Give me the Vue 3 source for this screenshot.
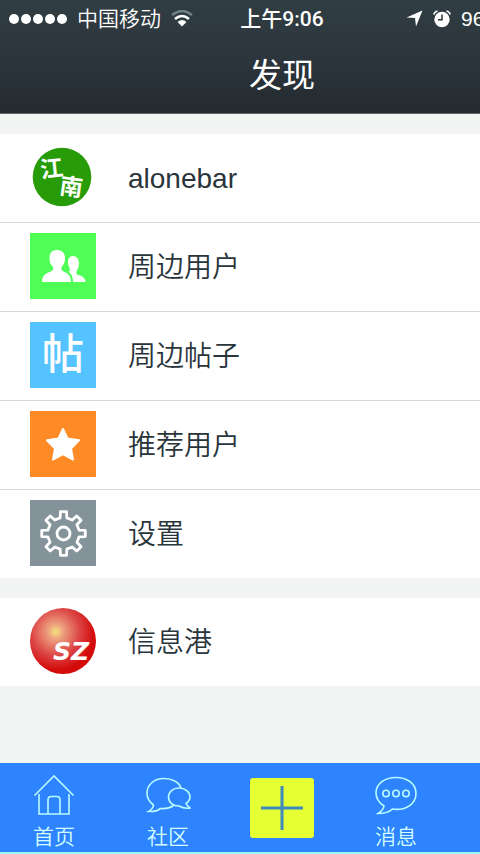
<script setup>
const groups = [
  [
    { id: 'profile', label: 'alonebar' },
    { id: 'users', label: '周边用户' },
    { id: 'posts', label: '周边帖子' },
    { id: 'recommend', label: '推荐用户' },
    { id: 'settings', label: '设置' },
  ],
  [{ id: 'port', label: '信息港' }],
]

const teeth = 8
const gearPath = (() => {
  const points = []
  const at = (radius, degrees) => {
    const a = (degrees * Math.PI) / 180
    points.push(`${(33.5 + radius * Math.cos(a)).toFixed(2)} ${(33.5 + radius * Math.sin(a)).toFixed(2)}`)
  }
  for (let i = 0; i < teeth; i++) {
    const c = (i * 360) / teeth
    at(16, c - 12)
    at(22, c - 8)
    at(22, c + 8)
    at(16, c + 12)
  }
  return `M${points.join('L')}Z`
})()
</script>

<template>
  <div class="screen">
    <div class="page">
      <header class="header">
        <div class="status">
          <div class="carrier">
            <span class="dots"><i v-for="n in 5" :key="n"></i></span>
            <span>中国移动</span>
            <svg class="wifi" width="22" height="17" viewBox="0 0 22 17" fill="none">
              <path d="M1 5Q11 -3 21 5" stroke="#718087" stroke-width="2.5" />
              <path d="M4 9Q11 3 18 9" stroke="#fff" stroke-width="2.6" />
              <path d="M6.500 12Q11 8 15.500 12L11 16.500Z" fill="#fff" />
            </svg>
          </div>
          <time class="clock">上午9:06</time>
          <div class="indicators">
            <svg width="17" height="17" viewBox="0 0 17 17"><path d="M16.500 .5L10 16.500L9 8L.5 7.500Z" fill="#fff" /></svg>
            <svg width="18" height="18" viewBox="0 0 18 18" fill="none">
              <circle cx="9" cy="9.500" r="7.700" fill="#fff" />
              <path d="M.8 4.500Q1.500 1.700 4.500 1M17.200 4.500Q16.500 1.700 13.500 1" stroke="#fff" stroke-width="1.500" />
              <path d="M9 4.500V9.800H5" stroke="#2d383e" stroke-width="1.500" />
            </svg>
            <span>96%</span>
            <svg width="42" height="18" viewBox="0 0 42 18"><path d="M1 1H37V17H1ZM39 6H41V12H39Z" fill="#fff" /></svg>
          </div>
        </div>
        <h1>发现</h1>
      </header>

      <main>
        <ul v-for="(group, g) in groups" :key="g" class="group">
          <li v-for="item in group" :key="item.id">
            <a class="row" href="#">
              <svg v-if="item.id === 'profile'" class="icon" viewBox="0 0 66 66">
                <circle cx="32" cy="33" r="29.300" fill="#289c08" />
                <text class="seal" x="10" y="33" font-size="23" transform="rotate(-6 21 24)">江</text>
                <text class="seal" x="30" y="51" font-size="23" transform="rotate(8 40 41)">南</text>
              </svg>
              <svg v-else-if="item.id === 'users'" class="icon" viewBox="0 0 66 66">
                <path fill="#50ff55" d="M0 0H66V66H0Z" />
                <path fill="#fff" d="M27 17C32 17 35 20 35 25C35 30 33.500 32 31.500 34V37C35 40 41 40 41 49H12C12 40 19 40 23 37V34C20.500 32 19.500 29 19.500 25C19.500 20 22 17 27 17Z" />
                <path fill="#fff" d="M43 23C46.500 23 49 26 49 30C49 34 48 36 46.500 38V41C50 43 55 43 55.500 49H43C43 43 41 40.500 38 38.500C41 38 40 37 39.500 35C36.500 29 38 23 43 23Z" />
              </svg>
              <span v-else-if="item.id === 'posts'" class="icon glyph" aria-hidden="true">帖</span>
              <svg v-else-if="item.id === 'recommend'" class="icon" viewBox="0 0 66 66">
                <path fill="#ff8b26" d="M0 0H66V66H0Z" />
                <path fill="#fff" stroke="#fff" stroke-width="2" stroke-linejoin="round" d="M33 18L37.500 27.500L49 29.200L41 37.500L43 48.500L33 43L23 48.500L25 37.500L17 29.200L28.500 27.500Z" />
              </svg>
              <svg v-else-if="item.id === 'settings'" class="icon" viewBox="0 0 66 66">
                <path fill="#84929a" d="M0 0H66V66H0Z" />
                <g fill="none" stroke="#fff" stroke-width="2.800" stroke-linejoin="round">
                  <path :d="gearPath" />
                  <circle cx="33.500" cy="33.500" r="6.500" />
                </g>
              </svg>
              <svg v-else class="icon" viewBox="0 0 66 66">
                <defs>
                  <radialGradient id="ball" cx=".39" cy=".36" r=".58">
                    <stop offset="0" stop-color="#f5e27c" />
                    <stop offset=".2" stop-color="#eda080" />
                    <stop offset=".62" stop-color="#dc4746" />
                    <stop offset="1" stop-color="#d30b0b" />
                  </radialGradient>
                </defs>
                <circle cx="33" cy="33" r="33" fill="url(#ball)" />
                <text class="sz" x="23" y="52" font-size="25">SZ</text>
              </svg>
              <span class="label">{{ item.label }}</span>
            </a>
          </li>
        </ul>
      </main>

      <nav class="tabs">
        <a class="tab" href="#">
          <svg width="42" height="42" viewBox="0 0 42 42">
            <path d="M1.500 21.500L21 2L40.500 21.500M6 20V40H36V20M15 40V26Q15 22.500 18 22.500H24Q27 22.500 27 26V40" />
          </svg>
          <span>首页</span>
        </a>
        <a class="tab" href="#">
          <svg width="46" height="42" viewBox="0 0 46 42">
            <path d="M36 14C34 8 27 4.500 19 4.500C9 4.500 2 11 2 19C2 25 5 28.500 8.500 31Q8 35 3.500 37.500Q11 38 15.500 34.500C20 35 25 34 28.500 31.500" />
            <path d="M34 14C28 14 23.500 18 23.500 23C23.500 28.500 28 32 34 32Q39 35 45 34Q42 32 41 29.500Q45 26.500 45 23C45 18 40 14 34 14Z" />
          </svg>
          <span>社区</span>
        </a>
        <button class="add" type="button" aria-label="发布">
          <svg width="42" height="44" viewBox="0 0 42 44"><path d="M21 0V44M0 22H42" /></svg>
        </button>
        <a class="tab" href="#">
          <svg width="44" height="42" viewBox="0 0 44 42">
            <path d="M22 3.500C10.500 3.500 2 10 2 19C2 25 5.500 29 10 32Q9.500 36 4 39.500Q14 39.500 18.500 35C33 37 42 29 42 19.500C42 10 33.500 3.500 22 3.500Z" />
            <circle cx="12" cy="19.500" r="3.200" /><circle cx="22" cy="19.500" r="3.200" /><circle cx="32" cy="19.500" r="3.200" />
          </svg>
          <span>消息</span>
        </a>
      </nav>
    </div>
  </div>
</template>

<style scoped>
.screen {
  overflow: hidden;
}

.page {
  display: flex;
  flex-direction: column;
  box-sizing: border-box;
  width: 117.5%;
  min-height: 100vh;
  background: #f3f5f5;
  color: #29353b;
  font-family: "Liberation Sans", "Noto Sans CJK SC", sans-serif;
  font-weight: 350;
}

.header {
  box-sizing: border-box;
  height: 114px;
  background: linear-gradient(#303d43, #2d383e 40%, #232a30);
  border-bottom: 1px solid #626568;
  color: #fff;
}

.status {
  display: grid;
  grid-template-columns: 1fr auto 1fr;
  align-items: center;
  height: 37px;
  padding: 0 9px;
  font-size: 21px;
  line-height: 36px;
}

.carrier,
.indicators,
.dots {
  display: flex;
  align-items: center;
}

.carrier {
  gap: 10px;
}

.dots {
  gap: 2px;
}

.dots i {
  width: 10px;
  height: 10px;
  border-radius: 50%;
  background: #fff;
}

.clock {
  font-family: Roboto, "Noto Sans CJK SC", sans-serif;
  font-weight: 500;
}

.indicators {
  justify-content: flex-end;
  gap: 10px;
}

h1 {
  margin: 0;
  font-size: 33px;
  font-weight: 400;
  line-height: 78px;
  text-align: center;
}

main {
  flex: 1;
  display: flex;
  flex-direction: column;
  gap: 20px;
  padding: 20px 0;
}

.group {
  margin: 0;
  padding: 0;
  list-style: none;
  background: #fff;
}

li + li {
  border-top: 1px solid #d5dadb;
}

.row {
  display: flex;
  align-items: center;
  gap: 32px;
  box-sizing: border-box;
  height: 88px;
  padding: 0 30px 2px;
  color: inherit;
  text-decoration: none;
}

.icon {
  flex: none;
  width: 66px;
  height: 66px;
}

.glyph {
  background: #55c3ff;
  color: #fff;
  font-size: 42px;
  font-weight: 500;
  line-height: 66px;
  text-align: center;
}

.seal {
  fill: #fff;
  font-weight: 700;
}

.sz {
  fill: #fff;
  font-weight: 700;
  font-style: italic;
  font-family: "DejaVu Sans", sans-serif;
}

.label {
  padding-top: 3px;
  font-size: 28px;
  line-height: 40px;
}

.tabs {
  display: grid;
  grid-template-columns: repeat(5, 1fr);
  align-items: center;
  justify-items: center;
  height: 89px;
  margin: 0 -3px;
  background: #2e84ff;
  border-bottom: 2px solid #9cf6ff;
}

.tab {
  display: flex;
  flex-direction: column;
  align-items: center;
  gap: 6px;
  padding-top: 10px;
  color: #d5ffff;
  font-size: 21px;
  line-height: 30px;
  text-decoration: none;
}

.tab svg {
  fill: none;
  stroke: #b9fbff;
  stroke-width: 1.6;
}

.add {
  display: grid;
  place-items: center;
  width: 64px;
  height: 60px;
  padding: 0;
  border: 0;
  border-radius: 3px;
  background: #e6ff34;
}

.add svg {
  stroke: #3e8ac0;
  stroke-width: 3;
}
</style>
